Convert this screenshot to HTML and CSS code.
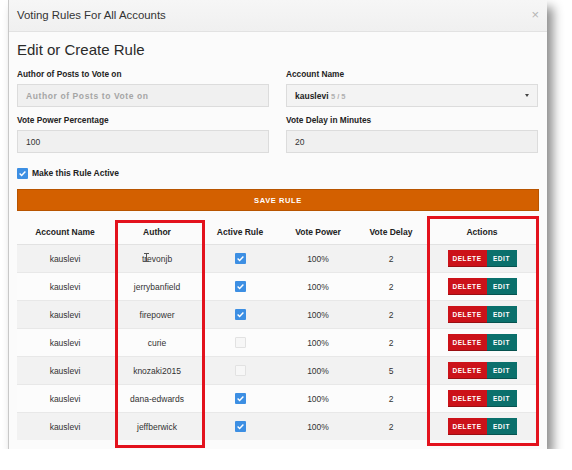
FILE: index.html
```html
<!DOCTYPE html>
<html>
<head>
<meta charset="utf-8">
<link rel="stylesheet" href="styles.css">
</head>
<body>
<div class="modal">
  <div class="modal-header">
    <span class="modal-title">Voting Rules For All Accounts</span>
    <span class="close">&times;</span>
  </div>
  <div class="modal-body">
    <h2 class="form-title">Edit or Create Rule</h2>
    <div class="form-grid">
      <div class="field">
        <label class="lbl">Author of Posts to Vote on</label>
        <div class="input placeholder">Author of Posts to Vote on</div>
      </div>
      <div class="field">
        <label class="lbl">Account Name</label>
        <div class="input select"><span><b>kauslevi</b> <span class="count">5 / 5</span></span><span class="caret"></span></div>
      </div>
      <div class="field">
        <label class="lbl">Vote Power Percentage</label>
        <div class="input value">100</div>
      </div>
      <div class="field">
        <label class="lbl">Vote Delay in Minutes</label>
        <div class="input value">20</div>
      </div>
    </div>
    <div class="check-row">
      <span class="cb on"><svg viewBox="0 0 11 11" width="11" height="11"><path d="M2.6 5.6 L4.6 7.5 L8.4 3.4" fill="none" stroke="#fff" stroke-width="1.4"/></svg></span>
      <span class="check-label">Make this Rule Active</span>
    </div>
    <button class="save">SAVE RULE</button>
    <div class="table-wrap">
      <table class="rules">
        <thead>
          <tr><th class="c1">Account Name</th><th class="c2">Author</th><th class="c3">Active Rule</th><th class="c4">Vote Power</th><th class="c5">Vote Delay</th><th class="c6">Actions</th></tr>
        </thead>
        <tbody>
          <tr><td>kauslevi</td><td class="author">trevonjb<span class="ibeam"></span></td><td><span class="cb on"><svg viewBox="0 0 11 11" width="11" height="11"><path d="M2.6 5.6 L4.6 7.5 L8.4 3.4" fill="none" stroke="#fff" stroke-width="1.4"/></svg></span></td><td>100%</td><td>2</td><td><span class="btns"><span class="del">DELETE</span><span class="edit">EDIT</span></span></td></tr>
          <tr><td>kauslevi</td><td>jerrybanfield</td><td><span class="cb on"><svg viewBox="0 0 11 11" width="11" height="11"><path d="M2.6 5.6 L4.6 7.5 L8.4 3.4" fill="none" stroke="#fff" stroke-width="1.4"/></svg></span></td><td>100%</td><td>2</td><td><span class="btns"><span class="del">DELETE</span><span class="edit">EDIT</span></span></td></tr>
          <tr><td>kauslevi</td><td>firepower</td><td><span class="cb on"><svg viewBox="0 0 11 11" width="11" height="11"><path d="M2.6 5.6 L4.6 7.5 L8.4 3.4" fill="none" stroke="#fff" stroke-width="1.4"/></svg></span></td><td>100%</td><td>2</td><td><span class="btns"><span class="del">DELETE</span><span class="edit">EDIT</span></span></td></tr>
          <tr><td>kauslevi</td><td>curie</td><td><span class="cb off"></span></td><td>100%</td><td>2</td><td><span class="btns"><span class="del">DELETE</span><span class="edit">EDIT</span></span></td></tr>
          <tr><td>kauslevi</td><td>knozaki2015</td><td><span class="cb off"></span></td><td>100%</td><td>5</td><td><span class="btns"><span class="del">DELETE</span><span class="edit">EDIT</span></span></td></tr>
          <tr><td>kauslevi</td><td>dana-edwards</td><td><span class="cb on"><svg viewBox="0 0 11 11" width="11" height="11"><path d="M2.6 5.6 L4.6 7.5 L8.4 3.4" fill="none" stroke="#fff" stroke-width="1.4"/></svg></span></td><td>100%</td><td>2</td><td><span class="btns"><span class="del">DELETE</span><span class="edit">EDIT</span></span></td></tr>
          <tr><td>kauslevi</td><td>jeffberwick</td><td><span class="cb on"><svg viewBox="0 0 11 11" width="11" height="11"><path d="M2.6 5.6 L4.6 7.5 L8.4 3.4" fill="none" stroke="#fff" stroke-width="1.4"/></svg></span></td><td>100%</td><td>2</td><td><span class="btns"><span class="del">DELETE</span><span class="edit">EDIT</span></span></td></tr>
        </tbody>
      </table>
      <div class="hl hl-author"></div>
      <div class="hl hl-actions"></div>
    </div>
  </div>
</div>
</body>
</html>
```

FILE: styles.css
```css
html, body {
  margin: 0;
  padding: 0;
  background: #ffffff;
  font-family: "Liberation Sans", Arial, sans-serif;
  color: #333;
}
.modal {
  margin-left: 8px;
  width: 538px;
  background: #fbfbfb;
  border-left: 1px solid #c8c8c8;
  box-shadow: 6px 7px 10px rgba(0,0,0,0.45);
}
.modal-header {
  height: 29px;
  border-bottom: 1px solid #e2e2e2;
  background: linear-gradient(#f6f6f6, #f0f0f0);
  display: flex;
  align-items: center;
  justify-content: space-between;
  padding: 0 8px 2px 8px;
}
.modal-title {
  font-size: 11.4px;
  color: #333;
}
.close {
  font-size: 13px;
  color: #b5b5b5;
  line-height: 1;
}
.modal-body {
  padding: 8px 8px 9px 8px;
}
.form-title {
  margin: 0;
  font-size: 15px;
  font-weight: normal;
  line-height: 20px;
  color: #2a2a2a;
}
.form-grid {
  display: grid;
  grid-template-columns: 252px 252px;
  column-gap: 17px;
  row-gap: 7px;
  margin-top: 8px;
}
.field {
  display: flex;
  flex-direction: column;
  gap: 4px;
}
.lbl {
  font-size: 8.3px;
  font-weight: bold;
  line-height: 12px;
  color: #222;
}
.input {
  height: 21px;
  box-sizing: content-box;
  border: 1px solid #dcdcdc;
  background: #f0f0f0;
  display: flex;
  align-items: center;
  padding: 0 8px;
  font-size: 8.5px;
}
.placeholder {
  color: #a5a5a5;
  font-weight: bold;
  letter-spacing: 0.6px;
}
.value {
  color: #333;
}
.select {
  justify-content: space-between;
  background: #f3f3f3;
}
.select b {
  color: #222;
}
.count {
  color: #b0b0b0;
  font-size: 7.5px;
  font-weight: bold;
}
.caret {
  width: 0;
  height: 0;
  border-left: 2.5px solid transparent;
  border-right: 2.5px solid transparent;
  border-top: 3px solid #444;
}
.check-row {
  display: flex;
  align-items: center;
  gap: 4px;
  margin-top: 14px;
  height: 12px;
}
.check-label {
  font-size: 8.5px;
  font-weight: bold;
  color: #222;
}
.cb {
  display: inline-block;
  width: 11px;
  height: 11px;
  border-radius: 1px;
  vertical-align: middle;
  box-sizing: border-box;
}
.cb svg {
  display: block;
}
.cb.on {
  background: #3d8fe3;
}
.cb.off {
  background: #f7f7f7;
  border: 1px solid #e2e2e2;
}
.save {
  display: block;
  width: 522px;
  height: 22px;
  margin-top: 10px;
  border: 1px solid #b85400;
  background: #d36000;
  color: #fff;
  font-family: "Liberation Sans", Arial, sans-serif;
  font-size: 7.5px;
  font-weight: bold;
  letter-spacing: 0.6px;
  padding: 0;
}
.table-wrap {
  position: relative;
  margin-top: 9px;
}
.rules {
  width: 522px;
  border-collapse: collapse;
  table-layout: fixed;
  font-size: 8.5px;
}
.rules th {
  height: 24px;
  font-weight: bold;
  color: #222;
  text-align: center;
  border-bottom: 1px solid #e2e2e2;
  padding: 0;
}
.rules td {
  height: 27px;
  text-align: center;
  color: #333;
  border-top: 1px solid #e8e8e8;
  padding: 0;
}
.rules tbody tr:nth-child(odd) {
  background: #f2f2f2;
}
.rules tbody tr:nth-child(even) {
  background: #fcfcfc;
}
.c1 { width: 96px; }
.c2 { width: 88px; }
.c3 { width: 78px; }
.c4 { width: 78px; }
.c5 { width: 68px; }
.c6 { width: 114px; }
.author {
  position: relative;
}
.ibeam {
  position: absolute;
  left: 33px;
  top: 8px;
  width: 1px;
  height: 9px;
  background: #555;
}
.ibeam::before,
.ibeam::after {
  content: "";
  position: absolute;
  left: -2px;
  width: 5px;
  height: 1px;
  background: #555;
}
.ibeam::before { top: 0; }
.ibeam::after { bottom: 0; }
.btns {
  display: inline-flex;
  height: 17px;
  vertical-align: middle;
}
.del, .edit {
  display: flex;
  align-items: center;
  justify-content: center;
  color: #fff;
  font-size: 6.5px;
  font-weight: bold;
  letter-spacing: 0.6px;
}
.del {
  width: 39px;
  background: #cc1219;
  border-bottom: 1px solid #9a0e12;
}
.edit {
  width: 30px;
  background: #0b706c;
  border-bottom: 1px solid #07524f;
}
.hl {
  position: absolute;
  border: 3px solid #e3121d;
  box-sizing: border-box;
}
.hl-author {
  left: 98px;
  top: 0px;
  width: 90px;
  height: 228px;
}
.hl-actions {
  left: 410px;
  top: -4px;
  width: 112px;
  height: 230px;
}
```
